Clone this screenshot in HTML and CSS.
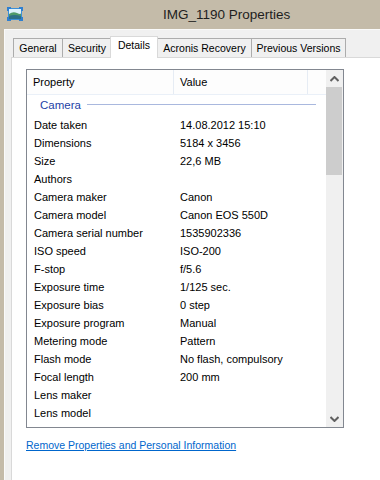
FILE: index.html
```html
<!DOCTYPE html>
<html lang="en">
<head>
    <meta charset="UTF-8">
    <title>IMG_1190 Properties</title>
    <link rel="stylesheet" href="styles.css">
</head>
<body>
    <div class="window">
        <div class="titlebar">
            <svg class="app-icon" width="16" height="14" viewBox="0 0 16 14">
                <rect x="1.5" y="1.5" width="13" height="11" fill="#dff1fb" stroke="#3d8fd6"/>
                <path d="M2 7 Q6 4 10 6 T14 6 V12 H2 Z" fill="#4f9a6a"/>
                <path d="M2 9 Q7 7 14 9 V12 H2 Z" fill="#2e6f86"/>
                <path d="M0 0 H4 V2 H2 V4 H0 Z M16 0 H12 V2 H14 V4 H16 Z M0 14 H4 V12 H2 V10 H0 Z M16 14 H12 V12 H14 V10 H16 Z" fill="#2f7fd0"/>
            </svg>
            <span class="title">IMG_1190 Properties</span>
        </div>
        <div class="client">
            <div class="tabs">
                <div class="tab tab-general">General</div>
                <div class="tab tab-security">Security</div>
                <div class="tab tab-details active">Details</div>
                <div class="tab tab-acronis">Acronis Recovery</div>
                <div class="tab tab-previous">Previous Versions</div>
            </div>
            <div class="panel">
                <div class="listbox">
                    <div class="list-main">
                        <div class="list-header">
                            <div class="col col-prop">Property</div>
                            <div class="col col-value">Value</div>
                            <div class="col col-rest"></div>
                        </div>
                        <div class="group">
                            <span class="group-name">Camera</span>
                            <span class="group-line"></span>
                        </div>
                        <div class="row"><span class="cell-prop">Date taken</span><span class="cell-value">14.08.2012 15:10</span></div>
                        <div class="row"><span class="cell-prop">Dimensions</span><span class="cell-value">5184 x 3456</span></div>
                        <div class="row"><span class="cell-prop">Size</span><span class="cell-value">22,6 MB</span></div>
                        <div class="row"><span class="cell-prop">Authors</span><span class="cell-value"></span></div>
                        <div class="row"><span class="cell-prop">Camera maker</span><span class="cell-value">Canon</span></div>
                        <div class="row"><span class="cell-prop">Camera model</span><span class="cell-value">Canon EOS 550D</span></div>
                        <div class="row"><span class="cell-prop">Camera serial number</span><span class="cell-value">1535902336</span></div>
                        <div class="row"><span class="cell-prop">ISO speed</span><span class="cell-value">ISO-200</span></div>
                        <div class="row"><span class="cell-prop">F-stop</span><span class="cell-value">f/5.6</span></div>
                        <div class="row"><span class="cell-prop">Exposure time</span><span class="cell-value">1/125 sec.</span></div>
                        <div class="row"><span class="cell-prop">Exposure bias</span><span class="cell-value">0 step</span></div>
                        <div class="row"><span class="cell-prop">Exposure program</span><span class="cell-value">Manual</span></div>
                        <div class="row"><span class="cell-prop">Metering mode</span><span class="cell-value">Pattern</span></div>
                        <div class="row"><span class="cell-prop">Flash mode</span><span class="cell-value">No flash, compulsory</span></div>
                        <div class="row"><span class="cell-prop">Focal length</span><span class="cell-value">200 mm</span></div>
                        <div class="row"><span class="cell-prop">Lens maker</span><span class="cell-value"></span></div>
                        <div class="row"><span class="cell-prop">Lens model</span><span class="cell-value"></span></div>
                    </div>
                    <div class="scrollbar">
                        <div class="scroll-btn">
                            <svg width="9" height="6" viewBox="0 0 9 6"><path d="M0.5 5 L4.5 1 L8.5 5" fill="none" stroke="#606060" stroke-width="2"/></svg>
                        </div>
                        <div class="scroll-thumb"></div>
                        <div class="scroll-track"></div>
                        <div class="scroll-btn">
                            <svg width="9" height="6" viewBox="0 0 9 6"><path d="M0.5 1 L4.5 5 L8.5 1" fill="none" stroke="#606060" stroke-width="2"/></svg>
                        </div>
                    </div>
                </div>
                <a class="remove-link" href="#">Remove Properties and Personal Information</a>
            </div>
        </div>
    </div>
</body>
</html>
```

FILE: styles.css
```css
* { margin: 0; padding: 0; box-sizing: border-box; }
html, body {
    width: 380px;
    height: 480px;
    overflow: hidden;
}
body {
    background: #c4bba9;
    font-family: "Liberation Sans", Arial, sans-serif;
    font-size: 11px;
    color: #000;
}
.window {
    display: flex;
    flex-direction: column;
    height: 480px;
}
.titlebar {
    height: 29px;
    display: flex;
    align-items: center;
    padding-left: 7px;
    flex-shrink: 0;
}
.app-icon {
    display: block;
    margin-top: -2px;
}
.title {
    margin-left: 140px;
    font-size: 13.5px;
    color: #1e1e1e;
    margin-top: -1px;
}
.client {
    flex: 1;
    margin-left: 4px;
    background: #f0f0f0;
    border-left: 1px solid #fafafa;
    border-top: 1px solid #fafafa;
    padding: 6px 0 0 6px;
    overflow: hidden;
}
.tabs {
    display: flex;
    align-items: flex-end;
    padding-left: 2px;
}
.tab {
    height: 19px;
    border: 1px solid #acacac;
    border-bottom: none;
    background: #f0f0f0;
    margin-right: -1px;
    text-align: center;
    line-height: 18px;
    font-size: 10.5px;
    color: #000;
}
.tab-general { width: 50px; }
.tab-security { width: 50px; }
.tab-details { width: 48px; margin-left: -1px; }
.tab-acronis { width: 95px; }
.tab-previous { width: 95px; }
.tab.active {
    height: 22px;
    margin-bottom: -1px;
    background: #fff;
    border-color: #d9d9d9;
    position: relative;
    z-index: 1;
    line-height: 17px;
}
.panel {
    background: #fff;
    border: 1px solid #d9d9d9;
    margin-right: -40px;
    height: 440px;
    padding: 11px 0 0 14px;
}
.listbox {
    width: 318px;
    height: 359px;
    border: 1px solid #828790;
    display: flex;
    background: #fff;
}
.list-main {
    flex: 1;
    overflow: hidden;
}
.list-header {
    display: flex;
    height: 25px;
    background: #fdfdfd;
    border-bottom: 1px solid #eaf0f8;
}
.col {
    border-right: 1px solid #e6ecf4;
    line-height: 24px;
    padding-left: 6px;
    font-size: 11px;
}
.col-prop { width: 147px; }
.col-value { width: 134px; }
.col-rest { flex: 1; border-right: none; }
.group {
    display: flex;
    align-items: center;
    height: 21px;
    padding: 0 10px 0 13px;
}
.group-name {
    color: #1e3fa6;
    font-size: 11.5px;
    margin-top: -2px;
}
.group-line {
    flex: 1;
    height: 1px;
    background: #a9b8de;
    margin-left: 6px;
    margin-top: -2px;
}
.row {
    display: flex;
    height: 18px;
    line-height: 18px;
    white-space: nowrap;
}
.cell-prop {
    width: 146px;
    padding-left: 7px;
}
.cell-value {
    padding-left: 7px;
}
.scrollbar {
    width: 17px;
    background: #f0f0f0;
    display: flex;
    flex-direction: column;
}
.scroll-btn {
    height: 17px;
    display: flex;
    align-items: center;
    justify-content: center;
}
.scroll-thumb {
    height: 88px;
    background: #cdcdcd;
    margin: 0 1px 0 0;
}
.scroll-track { flex: 1; }
.remove-link {
    display: inline-block;
    margin-top: 11px;
    color: #0066cc;
    text-decoration: underline;
    font-size: 10.5px;
}
```
